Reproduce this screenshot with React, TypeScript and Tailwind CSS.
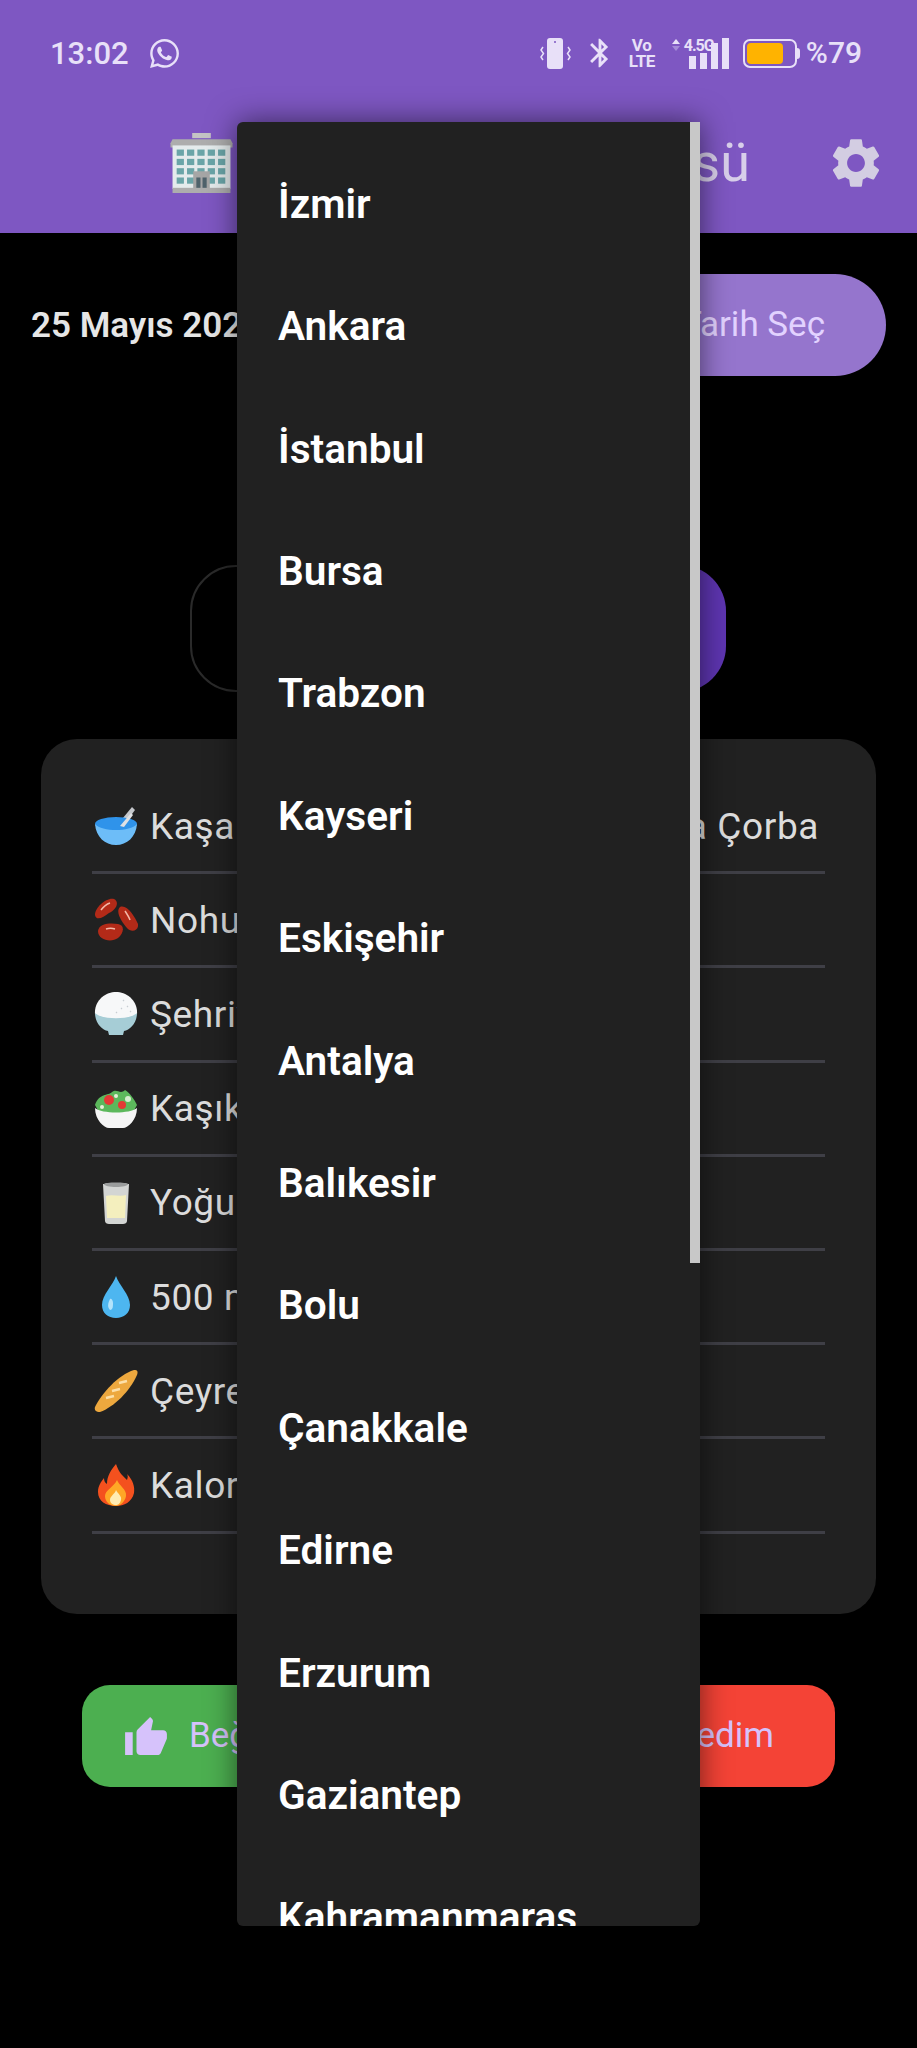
import { FaWhatsapp } from "react-icons/fa";
import { MdBluetooth } from "react-icons/md";
import type { ReactNode } from "react";

const cities = [
    "İzmir",
    "Ankara",
    "İstanbul",
    "Bursa",
    "Trabzon",
    "Kayseri",
    "Eskişehir",
    "Antalya",
    "Balıkesir",
    "Bolu",
    "Çanakkale",
    "Edirne",
    "Erzurum",
    "Gaziantep",
    "Kahramanmaraş",
];

const BowlEmoji = () => (
    <svg viewBox="0 0 44 44" className="w-[44px] h-[44px]">
        <path d="M24 20 L38 3 L41 6 L29 22 Z" fill="#c4c7cb" />
        <ellipse cx="22" cy="20" rx="21" ry="7" fill="#2f93ea" />
        <path d="M1 20 C2 33 11 41 22 41 C33 41 42 33 43 20 C36 28 8 28 1 20 Z" fill="#6dbdf8" />
        <path d="M26 22 L37 9 L39 11 L30 23 Z" fill="#dfe1e4" />
    </svg>
);

const BeansEmoji = () => (
    <svg viewBox="0 0 44 44" className="w-[44px] h-[44px]">
        <path d="M1 17 C1 9 13 -1 20 1 C26 4 22 12 15 15 C9 20 2 23 1 17 Z" fill="#b32a18" />
        <path d="M26 9 C33 6 41 19 44 26 C45 33 37 35 33 30 C28 24 21 14 26 9 Z" fill="#b32a18" />
        <path d="M4 33 C5 25 17 25 24 26 C31 27 30 35 24 40 C17 45 4 42 4 33 Z" fill="#b32a18" />
        <path d="M7 12 C10 8 13 6 16 5" stroke="#f4b8a8" strokeWidth="1.5" fill="none" />
        <path d="M31 13 C33 16 35 19 36 22" stroke="#f4b8a8" strokeWidth="1.5" fill="none" />
        <path d="M12 31 C15 30 18 30 21 31" stroke="#f4b8a8" strokeWidth="1.5" fill="none" />
    </svg>
);

const RiceEmoji = () => (
    <svg viewBox="0 0 44 44" className="w-[44px] h-[44px]">
        <path d="M1 22 C0 8 12 0 22 0 C32 0 44 8 43 22 C36 29 8 29 1 22 Z" fill="#f7f8f9" />
        <path d="M29 8 L30 9 M33 14 L34 15 M27 16 L28 17 M22 20 L23 21 M36 20 L37 19" stroke="#c8ced3" strokeWidth="1.2" />
        <path d="M1 21 C8 28 36 28 43 21 C43 31 36 38 30 39 L29 43 L15 43 L14 39 C8 38 1 31 1 21 Z" fill="#a6cdd6" />
    </svg>
);

const SaladEmoji = () => (
    <svg viewBox="0 0 44 44" className="w-[44px] h-[44px]">
        <path d="M1 18 C5 6 14 9 18 5 C23 1 26 8 31 3 C36 6 40 12 43 18 L38 27 L6 27 Z" fill="#5cb85c" />
        <circle cx="15" cy="13" r="5" fill="#e53935" />
        <circle cx="28" cy="18" r="4" fill="#e53935" />
        <circle cx="34" cy="12" r="3" fill="#d7ecd0" />
        <circle cx="22" cy="9" r="2" fill="#e8f0d8" />
        <circle cx="8" cy="20" r="2" fill="#e8f0d8" />
        <path d="M1 21 C8 27 36 27 43 21 C43 33 34 41 29 41 L15 41 C10 41 1 33 1 21 Z" fill="#f5f5f5" />
    </svg>
);

const MilkEmoji = () => (
    <svg viewBox="0 0 44 44" className="w-[44px] h-[44px]">
        <path d="M9 3 L35 3 L33 40 C33 42 31 43 29 43 L15 43 C13 43 11 42 11 40 Z" fill="#d3d5d3" />
        <path d="M12 15 C18 13 26 16 32 14 L31 37 L13 37 Z" fill="#f4efbe" />
        <path d="M10 3 C10 1 34 1 34 3 C34 7 10 7 10 3 Z" fill="#9a9c9c" />
    </svg>
);

const DropEmoji = () => (
    <svg viewBox="0 0 44 44" className="w-[44px] h-[44px]">
        <path d="M22 1 C25 10 36 20 36 30 C36 38 30 43 22 43 C14 43 8 38 8 30 C8 20 19 10 22 1 Z" fill="#4db6f0" />
        <path d="M16 24 C14 28 13 32 16 35 C19 35 19 31 19 28 C19 25 17 23 16 24 Z" fill="#b3e3fb" />
    </svg>
);

const BreadEmoji = () => (
    <svg viewBox="0 0 44 44" className="w-[44px] h-[44px]">
        <path d="M1 38 C8 24 24 6 40 1 C44 1 44 3 43 6 C36 22 20 38 6 43 C2 43 0 41 1 38 Z" fill="#eda83e" />
        <path d="M12 29 L20 27 M18 22 L26 20 M25 14 L33 12" stroke="#fde0a8" strokeWidth="2.5" />
    </svg>
);

const FireEmoji = () => (
    <svg viewBox="0 0 44 44" className="w-[44px] h-[44px]">
        <path d="M22 1 C25 10 29 13 33 17 C34 14 34 13 33 11 C39 17 41 24 40 30 C38 39 30 43 22 43 C12 43 4 38 4 29 C4 23 7 19 10 15 C10 18 11 20 13 21 C13 13 17 7 22 1 Z" fill="#f4511e" />
        <path d="M23 17 C25 23 33 26 32 33 C31 39 26 43 22 43 C16 43 11 39 11 33 C11 27 20 24 23 17 Z" fill="#ffa726" />
        <path d="M22 27 C24 31 28 33 27 37 C26 41 24 42 22 42 C19 42 16 40 16 37 C16 33 21 31 22 27 Z" fill="#ffecb3" />
    </svg>
);

const BuildingEmoji = () => (
    <svg viewBox="0 0 60 58" className="w-[63px] h-[60px]">
        <rect x="21" y="0" width="18" height="5" fill="#c4c4c4" />
        <path d="M2 6 H58 L60 10 V14 H0 V10 Z" fill="#adadad" />
        <rect x="2" y="12" width="56" height="42" fill="#e4ebec" />
        {[16, 25, 34, 43].map((y) =>
            [6, 16, 26, 36, 46].map((x) => <rect key={`${x}-${y}`} x={x} y={y} width="7" height="6" fill="#6aa5a8" />)
        )}
        <rect x="22" y="37" width="16" height="17" fill="#a6a6a6" />
        <rect x="25" y="43" width="4" height="11" fill="#4f626b" />
        <rect x="31" y="43" width="4" height="11" fill="#4f626b" />
        <rect x="2" y="53" width="56" height="5" fill="#adadad" />
    </svg>
);

const GearIcon = () => (
    <svg viewBox="2 1.5 20 21" className="w-[52px] h-[52px]" fill="#d3cde2">
        <path d="M19.14 12.94c.04-.3.06-.61.06-.94 0-.32-.02-.64-.07-.94l2.03-1.58c.18-.14.23-.41.12-.61l-1.92-3.32c-.12-.22-.37-.29-.59-.22l-2.39.96c-.5-.38-1.03-.7-1.62-.94l-.36-2.54c-.04-.24-.24-.41-.48-.41h-3.84c-.24 0-.43.17-.47.41l-.36 2.54c-.59.24-1.13.57-1.62.94l-2.39-.96c-.22-.08-.47 0-.59.22L2.74 8.87c-.12.21-.08.47.12.61l2.03 1.58c-.05.3-.09.63-.09.94s.02.64.07.94l-2.03 1.58c-.18.14-.23.41-.12.61l1.92 3.32c.12.22.37.29.59.22l2.39-.96c.5.38 1.03.7 1.62.94l.36 2.54c.05.24.24.41.48.41h3.84c.24 0 .44-.17.47-.41l.36-2.54c.59-.24 1.13-.56 1.62-.94l2.39.96c.22.08.47 0 .59-.22l1.92-3.32c.12-.22.07-.47-.12-.61l-2.01-1.58zM12 15.6c-1.98 0-3.6-1.62-3.6-3.6s1.62-3.6 3.6-3.6 3.6 1.62 3.6 3.6-1.62 3.6-3.6 3.6z" />
    </svg>
);

const ThumbUp = () => (
    <svg viewBox="1 1 22 20" className="w-[44px] h-[38px]" fill="#d6c2fb">
        <path d="M1 21h4V9H1v12zm22-11c0-1.1-.9-2-2-2h-6.31l.95-4.57.03-.32c0-.41-.17-.79-.44-1.06L14.17 1 7.59 7.59C7.22 7.95 7 8.45 7 9v10c0 1.1.9 2 2 2h9c.83 0 1.54-.5 1.84-1.22l3.02-7.05c.09-.23.14-.47.14-.73v-2z" />
    </svg>
);

const VibrateIcon = () => (
    <svg viewBox="0 0 31 31" className="w-[31px] h-[31px]" fill="none">
        <rect x="7" y="0" width="16" height="31" rx="3" fill="#e8e0f8" />
        <circle cx="15" cy="4" r="1" fill="#7e57c2" />
        <path d="M3 9 L1 12 L3.5 15.5 L1 19 L3 22" stroke="#e8e0f8" strokeWidth="1.5" />
        <path d="M28 9 L30 12 L27.5 15.5 L30 19 L28 22" stroke="#e8e0f8" strokeWidth="1.5" />
    </svg>
);

const SignalIcon = () => (
    <div className="relative w-[57px] h-[31px]">
        <span className="absolute left-0 top-[1px] w-0 h-0 border-x-[4px] border-x-transparent border-b-[5px] border-b-[#e8e0f8]" />
        <span className="absolute left-0 top-[8px] w-0 h-0 border-x-[4px] border-x-transparent border-t-[5px] border-t-[#a58bd8]" />
        <div className="absolute right-0 bottom-0 flex items-end gap-[4px]">
            <span className="w-[7px] h-[13px] bg-[#e8e0f8]" />
            <span className="w-[7px] h-[16px] bg-[#e8e0f8]" />
            <span className="w-[7px] h-[26px] bg-[#e8e0f8]" />
            <span className="w-[7px] h-[31px] bg-[#e8e0f8]" />
        </div>
        <span className="absolute left-[12px] top-0 text-[16px] leading-[15px] font-bold tracking-[-1px] text-[#e8e0f8]">4.5G</span>
    </div>
);

const StatusBar = () => (
    <div className="h-[106px] flex items-center pl-[50px] pr-[55px] text-[#e8e0f8]">
        <span className="text-[31px] font-medium leading-none">13:02</span>
        <FaWhatsapp className="ml-[19px] w-[33px] h-[33px]" />
        <div className="ml-auto flex items-center">
            <VibrateIcon />
            <MdBluetooth className="ml-[12px] w-[34px] h-[34px]" />
            <div className="ml-[11px] w-[28px] flex flex-col items-center text-[17px] font-bold leading-[16px]">
                <span>Vo</span>
                <span className="tracking-[-0.5px]">LTE</span>
            </div>
            <div className="ml-[16px]">
                <SignalIcon />
            </div>
            <div className="ml-[14px] flex items-center">
                <div className="w-[54px] h-[29px] rounded-[7px] border-2 border-[#e8e0f8] p-[2px]">
                    <div className="w-[36px] h-full rounded-[4px] bg-[#ffb300]" />
                </div>
                <span className="w-[3px] h-[11px] rounded-r-sm bg-[#e8e0f8]" />
            </div>
            <span className="ml-[6px] text-[30px] font-medium leading-none">%79</span>
        </div>
    </div>
);

const MealRow = ({ icon, text, right }: { icon: ReactNode; text: string; right?: string }) => (
    <div className="h-[94.2px] border-b-[3px] border-[#3f3f46] pl-[2px] pr-[6px] pt-[1px] flex items-center text-[37px] leading-none tracking-[0.6px] text-[#dcdcdc]">
        {icon}
        <span className="ml-[12px]">{text}</span>
        {right && <span className="ml-auto">{right}</span>}
    </div>
);

export default function App() {
    return (
        <div className="relative w-[917px] h-[2048px] overflow-hidden bg-black font-['Roboto',sans-serif]">
            <header className="h-[233px] bg-[#7e57c2]">
                <StatusBar />
                <div className="h-[114px] flex items-center pl-[170px] pr-[35px]">
                    <div className="w-[580px] flex items-center justify-between">
                        <BuildingEmoji />
                        <span className="text-[54px] leading-none text-[#d8cfea]">Yemek Menüsü</span>
                    </div>
                    <div className="ml-auto">
                        <GearIcon />
                    </div>
                </div>
            </header>

            <div className="mt-[41px] pl-[31px] pr-[31px] flex items-center justify-between">
                <span className="pt-[3px] text-[35px] font-semibold text-[#e6e6e6]">25 Mayıs 2025</span>
                <button type="button" className="h-[102px] w-[300px] pr-[61px] rounded-[51px] bg-[#9575cd] text-[35px] text-right text-[#e2d2ff]">
                    Tarih Seç
                </button>
            </div>

            <div className="mt-[189px] ml-[190px] w-[536px] h-[127px] flex">
                <div className="w-1/2 rounded-[46px] border-2 border-[#2a2a2a]" />
                <div className="w-1/2 rounded-[46px] bg-[#5e35b1]" />
            </div>

            <section className="mt-[47px] ml-[41px] w-[835px] h-[875px] rounded-[36px] bg-[#212121] px-[51px] pt-[41px]">
                <MealRow icon={<BowlEmoji />} text="Kaşarlı" right="Tarhana Çorba" />
                <MealRow icon={<BeansEmoji />} text="Nohut" />
                <MealRow icon={<RiceEmoji />} text="Şehriye Pilavı" />
                <MealRow icon={<SaladEmoji />} text="Kaşık Salata" />
                <MealRow icon={<MilkEmoji />} text="Yoğurt" />
                <MealRow icon={<DropEmoji />} text="500 ml Su" />
                <MealRow icon={<BreadEmoji />} text="Çeyrek Ekmek" />
                <MealRow icon={<FireEmoji />} text="Kalori" />
            </section>

            <div className="mt-[71px] ml-[82px] w-[753px] flex justify-between">
                <button type="button" className="h-[102px] w-[340px] rounded-[28px] bg-[#4caf50] pl-[42px] flex items-center gap-[21px] text-[35px] text-[#d6c2fb]">
                    <ThumbUp />
                    Beğendim
                </button>
                <button type="button" className="h-[102px] w-[340px] rounded-[28px] bg-[#f44336] pr-[61px] text-right text-[35px] text-[#d6c2fb]">
                    Beğenmedim
                </button>
            </div>

            {/* açık şehir menüsü */}
            <div className="absolute left-[237px] top-[122px] w-[463px] h-[1804px] overflow-hidden rounded-[6px] rounded-tr-none bg-[#212121] shadow-[0_0_30px_rgba(0,0,0,0.55)]">
                <ul className="pl-[41px]">
                    {cities.map((city) => (
                        <li key={city} className="h-[122.4px] pt-[42px] flex items-center text-[40.6px] font-semibold leading-none text-white">
                            {city}
                        </li>
                    ))}
                </ul>
                <div className="absolute right-0 top-0 w-[10px] h-[1141px] bg-[#c8c8c8]" />
            </div>
        </div>
    );
}
